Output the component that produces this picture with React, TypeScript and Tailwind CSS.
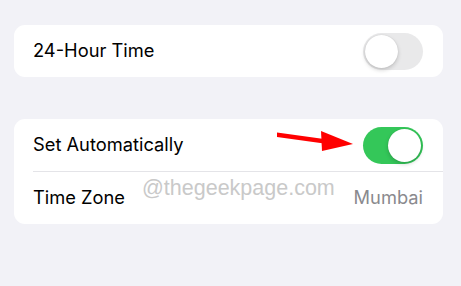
import React from "react";

function Toggle({ on }: { on: boolean }) {
  return (
    <div
      className={`flex h-[37px] w-[60px] items-center rounded-full p-[2px] ${
        on ? "justify-end bg-[#34c759]" : "justify-start bg-[#e9e9ea]"
      }`}
    >
      <div className="h-[33px] w-[33px] rounded-full bg-white shadow-[0_2px_4px_rgba(0,0,0,0.18),0_0_1px_rgba(0,0,0,0.15)]" />
    </div>
  );
}

function Row({ label, children }: { label: string; children: React.ReactNode }) {
  return (
    <div className="flex h-[52px] items-center justify-between pl-[19px] pr-[20px]">
      <span className="text-[18.3px] text-black">{label}</span>
      {children}
    </div>
  );
}

export default function App() {
  return (
    <div
      className="relative h-[286px] w-[461px] overflow-hidden bg-[#f2f2f7] pl-[14px] pr-[18px] pt-[25px]"
      style={{ fontFamily: "Inter, 'Liberation Sans', sans-serif" }}
    >
      <div className="rounded-[11px] bg-white">
        <Row label="24-Hour Time">
          <Toggle on={false} />
        </Row>
      </div>

      <div className="mt-[42px] rounded-[11px] bg-white">
        <Row label="Set Automatically">
          <Toggle on={true} />
        </Row>
        <div className="ml-[19px] h-px bg-[#e4e4e8]" />
        <Row label="Time Zone">
          <span className="text-[18.3px] text-[#8a8a8e]">Mumbai</span>
        </Row>
      </div>

      {/* watermark */}
      <div
        className="pointer-events-none absolute left-[142px] top-[172px] text-[21.5px] text-[#c9c9c9]"
        style={{ fontFamily: "'Liberation Sans', Arial, sans-serif" }}
      >
        @thegeekpage.com
      </div>

      {/* red arrow */}
      <svg className="absolute left-0 top-0" width="461" height="286" viewBox="0 0 461 286">
        <polygon points="277,132.5 324,139 324,143.5 277,137" fill="#ff0000" />
        <polygon points="321,131 353,144 322,151" fill="#ff0000" />
      </svg>
    </div>
  );
}
